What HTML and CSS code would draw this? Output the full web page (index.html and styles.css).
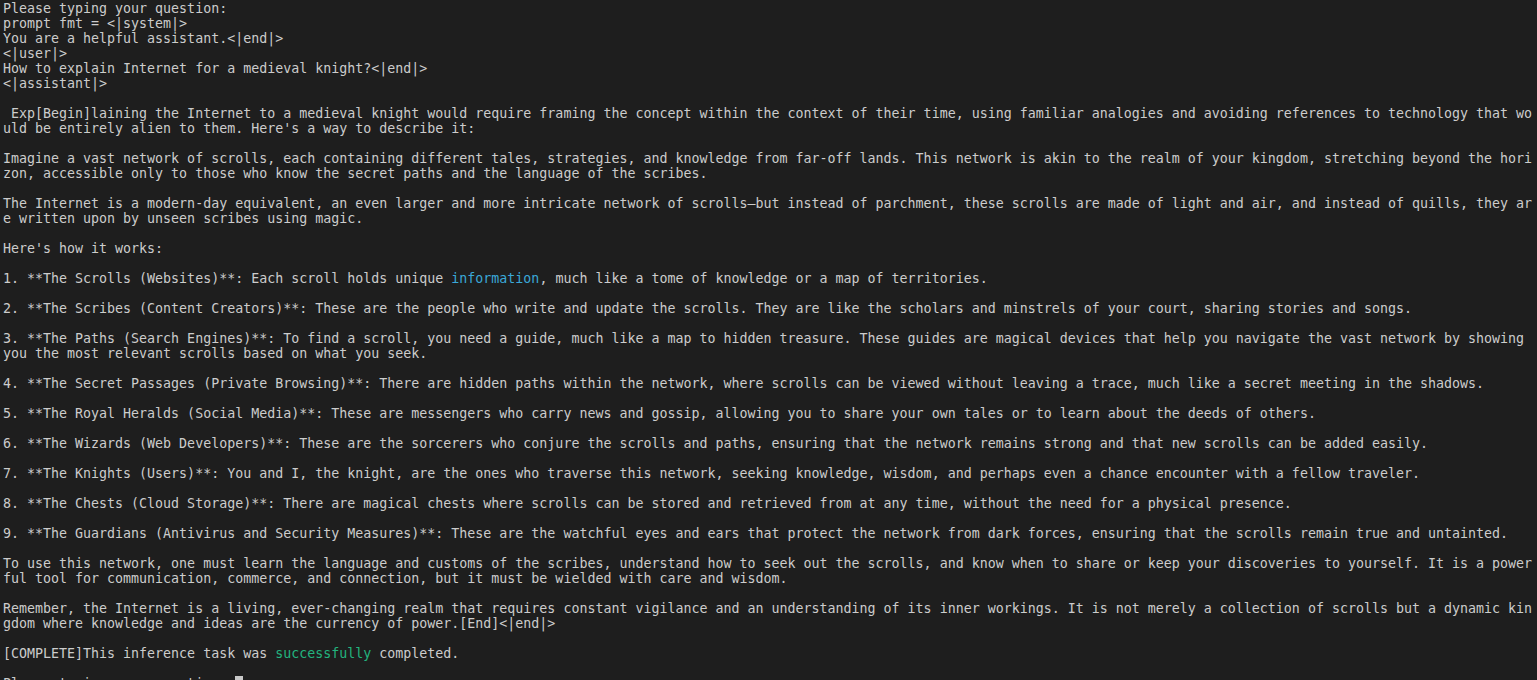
FILE: index.html
```html
<!DOCTYPE html>
<html>
<head>
<meta charset="utf-8">
<link rel="stylesheet" href="styles.css">
</head>
<body>
<pre class="term">Please typing your question:
prompt fmt = &lt;|system|&gt;
You are a helpful assistant.&lt;|end|&gt;
&lt;|user|&gt;
How to explain Internet for a medieval knight?&lt;|end|&gt;
&lt;|assistant|&gt;

 Exp[Begin]laining the Internet to a medieval knight would require framing the concept within the context of their time, using familiar analogies and avoiding references to technology that wo
uld be entirely alien to them. Here's a way to describe it:

Imagine a vast network of scrolls, each containing different tales, strategies, and knowledge from far-off lands. This network is akin to the realm of your kingdom, stretching beyond the hori
zon, accessible only to those who know the secret paths and the language of the scribes.

The Internet is a modern-day equivalent, an even larger and more intricate network of scrolls—but instead of parchment, these scrolls are made of light and air, and instead of quills, they ar
e written upon by unseen scribes using magic.

Here's how it works:

1. **The Scrolls (Websites)**: Each scroll holds unique <span class="info">information</span>, much like a tome of knowledge or a map of territories.

2. **The Scribes (Content Creators)**: These are the people who write and update the scrolls. They are like the scholars and minstrels of your court, sharing stories and songs.

3. **The Paths (Search Engines)**: To find a scroll, you need a guide, much like a map to hidden treasure. These guides are magical devices that help you navigate the vast network by showing
you the most relevant scrolls based on what you seek.

4. **The Secret Passages (Private Browsing)**: There are hidden paths within the network, where scrolls can be viewed without leaving a trace, much like a secret meeting in the shadows.

5. **The Royal Heralds (Social Media)**: These are messengers who carry news and gossip, allowing you to share your own tales or to learn about the deeds of others.

6. **The Wizards (Web Developers)**: These are the sorcerers who conjure the scrolls and paths, ensuring that the network remains strong and that new scrolls can be added easily.

7. **The Knights (Users)**: You and I, the knight, are the ones who traverse this network, seeking knowledge, wisdom, and perhaps even a chance encounter with a fellow traveler.

8. **The Chests (Cloud Storage)**: There are magical chests where scrolls can be stored and retrieved from at any time, without the need for a physical presence.

9. **The Guardians (Antivirus and Security Measures)**: These are the watchful eyes and ears that protect the network from dark forces, ensuring that the scrolls remain true and untainted.

To use this network, one must learn the language and customs of the scribes, understand how to seek out the scrolls, and know when to share or keep your discoveries to yourself. It is a power
ful tool for communication, commerce, and connection, but it must be wielded with care and wisdom.

Remember, the Internet is a living, ever-changing realm that requires constant vigilance and an understanding of its inner workings. It is not merely a collection of scrolls but a dynamic kin
gdom where knowledge and ideas are the currency of power.[End]&lt;|end|&gt;

[COMPLETE]This inference task was <span class="ok">successfully</span> completed.

Please typing your question: <span class="cursor"> </span></pre>
</body>
</html>
```

FILE: styles.css
```css
html, body {
  margin: 0;
  padding: 0;
  background: #1e1e1e;
  height: 100%;
  overflow: hidden;
}

.term {
  margin: 0;
  padding: 1px 3px 0 3px;
  font-family: "DejaVu Sans Mono", monospace;
  font-size: 13.3px;
  line-height: 15px;
  color: #cccccc;
  white-space: pre;
}

.info {
  color: #3aa8d8;
}

.ok {
  color: #23b47e;
}

.cursor {
  display: inline-block;
  width: 8px;
  height: 15px;
  vertical-align: top;
  background: #c8c8c8;
}
```
